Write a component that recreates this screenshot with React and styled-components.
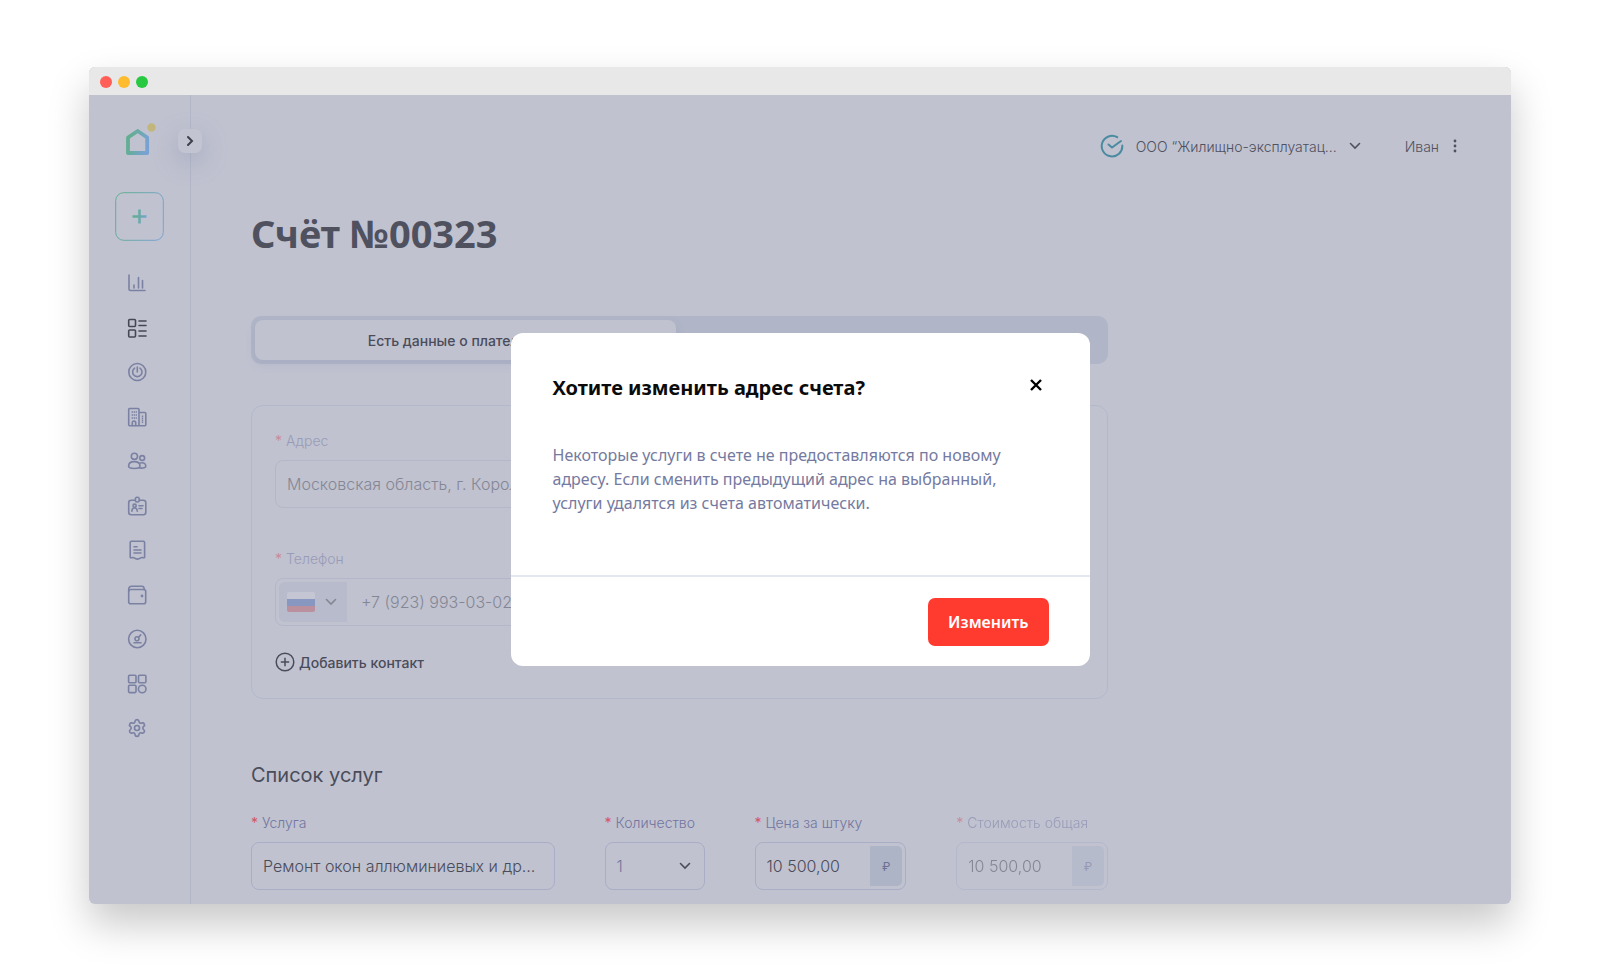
import { useState } from 'react';
import styled, { createGlobalStyle } from 'styled-components';
import { Settings } from 'lucide-react';

const navIcons = [
  {
    name: 'Аналитика',
    icon: <path d='M2 2v14a1.5 1.5 0 0 0 1.5 1.5H18M7 12v3M11.5 4.5V15M15.5 7.5V15' />,
  },
  {
    name: 'Счета',
    active: true,
    icon: (
      <>
        <rect x='1.7' y='1.5' width='6.8' height='7' rx='1' />
        <rect x='1.7' y='12' width='6.8' height='7' rx='1' />
        <path d='M12 3h7M12 7.5h7M12 13h7M12 18h7' />
      </>
    ),
  },
  {
    name: 'Состояние',
    icon: (
      <>
        <circle cx='10.3' cy='10' r='8.5' />
        <path d='M10.3 5v5M7.6 6.1a4.7 4.7 0 1 0 5.4 0' />
      </>
    ),
  },
  {
    name: 'Дома',
    icon: (
      <>
        <path d='M12 18.7H2.7a1 1 0 0 1-1-1V2.5a1 1 0 0 1 1-1H11a1 1 0 0 1 1 1v16.2M12 5.5h5.8a1 1 0 0 1 1 1v11.2a1 1 0 0 1-1 1H12' />
        <path d='M5.3 18.5v-2.8a1.7 1.7 0 0 1 3.4 0v2.8' />
        <path className='dots' d='M4.6 5h5.4M4.6 8h5.4M4.6 11h5.4M15.5 8.5v7.5' />
      </>
    ),
  },
  {
    name: 'Жители',
    icon: (
      <>
        <circle cx='7.4' cy='5.3' r='3.1' />
        <circle cx='15.2' cy='7' r='2.4' />
        <path d='M1.6 15c0-3 2.6-4.4 5.7-4.4S13 12 13 15c0 3.3-11.4 3.3-11.4 0zM12.5 12.3c2.7-1.2 6.3-.2 6.3 2.7 0 1.9-2.4 2.3-6 2' />
      </>
    ),
  },
  {
    name: 'Сотрудники',
    icon: (
      <>
        <path d='M8.2 4.2h-4a2.5 2.5 0 0 0-2.5 2.5v9.6a2.5 2.5 0 0 0 2.5 2.5h12.1a2.5 2.5 0 0 0 2.5-2.5V6.7a2.5 2.5 0 0 0-2.5-2.5h-3.9' />
        <rect x='8.4' y='1.3' width='3.8' height='4.7' rx='1.7' />
        <circle cx='7.6' cy='9.7' r='1.6' />
        <path d='M4.9 15.2c0-4.2 5.4-4.2 5.4 0M12 9.8h4M12 12.5h3' />
      </>
    ),
  },
  {
    name: 'Квитанции',
    icon: (
      <>
        <path d='M3.2 17.5v-15a1.2 1.2 0 0 1 1.2-1.2h12a1.2 1.2 0 0 1 1.2 1.2v15c-1.8.8-2.6-.6-3.9.3-1.3 1-2 1.3-3.3 1.3s-2-.3-3.3-1.3c-1.3-.9-2.1.5-3.9-.3z' />
        <path d='M7 6.8h3M7 10h7M7 13h7' />
      </>
    ),
  },
  {
    name: 'Кошелёк',
    icon: (
      <>
        <rect x='1.7' y='4.5' width='17' height='14.3' rx='2' />
        <path d='M1.7 6.500V4a2.7 2.7 0 0 1 2.7-2.7h10.300A2.300 2.300 0 0 1 17 4.500' />
        <circle cx='15' cy='11' r='.6' />
      </>
    ),
  },
  {
    name: 'Счётчики',
    icon: (
      <>
        <circle cx='10.3' cy='10' r='8.7' />
        <circle cx='10' cy='9.8' r='2' />
        <path d='m11.5 8.3 2.200-2.400M7 13.800h7' />
      </>
    ),
  },
  {
    name: 'Сервисы',
    icon: (
      <>
        <rect x='1.6' y='1.3' width='7.4' height='7.4' rx='1' />
        <rect x='11.5' y='1.3' width='7.4' height='7.4' rx='1' />
        <rect x='1.6' y='11.2' width='7.4' height='7.4' rx='1' />
        <circle cx='15.2' cy='15' r='3.8' />
      </>
    ),
  },
];

const chevronDown = (
  <svg width='12' height='12' viewBox='0 0 12 12' fill='none' stroke='currentColor' strokeWidth='1.6'>
    <path d='M1.5 3.5 6 8l4.5-4.5' strokeLinecap='round' />
  </svg>
);

function Logo() {
  return (
    <StyledLogo href='/' aria-label='Главная'>
      <svg width='30' height='33' viewBox='0 0 30 33' fill='none'>
        <defs>
          <linearGradient id='brand' x1='0' y1='0.3' x2='1' y2='0.6'>
            <stop offset='0.1' stopColor='#62ae92' />
            <stop offset='1' stopColor='#78a2d2' />
          </linearGradient>
        </defs>
        <path d='M2 30V14.5L11.7 8l9.5 6.5V30z' stroke='url(#brand)' strokeWidth='3.8' strokeLinejoin='round' />
        <circle cx='25.5' cy='4.500' r='4.200' fill='#c2b67c' />
      </svg>
    </StyledLogo>
  );
}

function Field({ id, label, faded, children }) {
  return (
    <StyledField $faded={faded}>
      <StyledLabel htmlFor={id}>
        <StyledStar>*</StyledStar>
        {label}
      </StyledLabel>
      <StyledControl>{children}</StyledControl>
    </StyledField>
  );
}

export default function App() {
  const [isOpen, setIsOpen] = useState(true);

  return (
    <StyledPage>
      <GlobalStyle />
      <StyledWindow>
        <StyledTitleBar>
          <StyledLight $color='#ff5f57' />
          <StyledLight $color='#febc2e' />
          <StyledLight $color='#28c840' />
        </StyledTitleBar>
        <StyledBody>
          <StyledSidebar>
            <Logo />
            <StyledToggle aria-label='Развернуть меню'>
              <svg width='12' height='12' viewBox='0 0 12 12' fill='none' stroke='currentColor' strokeWidth='2'>
                <path d='m4 2 4 4-4 4' strokeLinecap='round' />
              </svg>
            </StyledToggle>
            <StyledCreate aria-label='Создать'>
              <svg width='49' height='49' viewBox='0 0 49 49' fill='none'>
                <defs>
                  <linearGradient id='plus' gradientUnits='userSpaceOnUse' x1='17' y1='24' x2='32' y2='26'>
                    <stop offset='0.2' stopColor='#62ae92' />
                    <stop offset='1' stopColor='#78a2d2' />
                  </linearGradient>
                </defs>
                <rect x='.7' y='.7' width='47.6' height='47.6' rx='8' stroke='url(#brand)' strokeWidth='1' />
                <path d='M17.500 24.500h14M24.500 17.500v14' stroke='url(#plus)' strokeWidth='2.600' />
              </svg>
            </StyledCreate>
            <StyledNav>
              {navIcons.map((item) => (
                <StyledNavLink key={item.name} href='/' aria-label={item.name} $active={item.active}>
                  <svg width='20' height='20' viewBox='0 0 20 20'>
                    {item.icon}
                  </svg>
                </StyledNavLink>
              ))}
              <StyledNavLink href='/' aria-label='Настройки'>
                <Settings size={20} />
              </StyledNavLink>
            </StyledNav>
          </StyledSidebar>

          <StyledMain>
            <StyledHeader>
              <StyledHeaderButton>
                <StyledCheck width='24' height='24' viewBox='0 0 24 24'>
                  <path d='M17.2 3.2a10.3 10.3 0 1 0 5.100 8.300' />
                  <path d='m8.500 10.500 3.500 3L21 7' />
                </StyledCheck>
                ООО “Жилищно-эксплуатац...
                {chevronDown}
              </StyledHeaderButton>
              <StyledHeaderButton>
                Иван
                <svg width='8' height='14' viewBox='0 0 8 14' fill='currentColor'>
                  <circle cx='4' cy='2' r='1.4' />
                  <circle cx='4' cy='7' r='1.4' />
                  <circle cx='4' cy='12' r='1.4' />
                </svg>
              </StyledHeaderButton>
            </StyledHeader>

            <StyledContent>
              <StyledTitle>Счёт №00323</StyledTitle>
              <StyledTabs>
                <StyledTab $active>Есть данные о плательщике</StyledTab>
                <StyledTab aria-label='Нет данных' />
              </StyledTabs>

              <StyledCard>
                <Field id='address' label='Адрес' faded>
                  <StyledInput id='address' defaultValue='Московская область, г. Королёв' />
                </Field>
                <Field id='phone' label='Телефон' faded>
                  <StyledCountry aria-label='Код страны'>
                    <StyledFlag width='28' height='20' viewBox='0 0 28 20'>
                      <path fill='#c8cad6' d='M0 0h28v7H0z' />
                      <path fill='#4f6db0' d='M0 7h28v7H0z' />
                      <path fill='#b8606d' d='M0 14h28v6H0z' />
                    </StyledFlag>
                    {chevronDown}
                  </StyledCountry>
                  <StyledInput id='phone' type='tel' defaultValue='+7 (923) 993-03-02' />
                </Field>
                <StyledAdd>
                  <svg width='20' height='20' viewBox='0 0 20 20' fill='none' stroke='currentColor' strokeWidth='1.5'>
                    <circle cx='10' cy='10' r='8.8' />
                    <path d='M5.8 10h8.400M10 5.800v8.400' />
                  </svg>
                  Добавить контакт
                </StyledAdd>
              </StyledCard>

              <StyledSubtitle>Список услуг</StyledSubtitle>
              <StyledServices>
                <Field id='service' label='Услуга'>
                  <StyledInput id='service' defaultValue='Ремонт окон аллюминиевых и др…' />
                </Field>
                <Field id='count' label='Количество'>
                  <StyledSelect id='count'>
                    <option>1</option>
                  </StyledSelect>
                  <StyledArrow>{chevronDown}</StyledArrow>
                </Field>
                <Field id='price' label='Цена за штуку'>
                  <StyledInput id='price' defaultValue='10 500,00' />
                  <StyledCurrency>₽</StyledCurrency>
                </Field>
                <Field id='total' label='Стоимость общая' faded>
                  <StyledInput id='total' defaultValue='10 500,00' readOnly />
                  <StyledCurrency>₽</StyledCurrency>
                </Field>
              </StyledServices>
            </StyledContent>
          </StyledMain>

          {isOpen && (
            <StyledOverlay>
              <StyledModal role='dialog' aria-labelledby='modal-title'>
                <StyledModalBody>
                  <StyledModalHeader>
                    <StyledModalTitle id='modal-title'>Хотите изменить адрес счета?</StyledModalTitle>
                    <StyledClose aria-label='Закрыть' onClick={() => setIsOpen(false)}>
                      <svg width='12' height='12' viewBox='0 0 12 12' stroke='currentColor' strokeWidth='2.4'>
                        <path d='m1 1 10 10M11 1 1 11' />
                      </svg>
                    </StyledClose>
                  </StyledModalHeader>
                  <StyledModalText>
                    Некоторые услуги в счете не предоставляются по новому адресу. Если сменить предыдущий
                    адрес на выбранный, услуги удалятся из счета автоматически.
                  </StyledModalText>
                </StyledModalBody>
                <StyledModalFooter>
                  <StyledConfirm onClick={() => setIsOpen(false)}>Изменить</StyledConfirm>
                </StyledModalFooter>
              </StyledModal>
            </StyledOverlay>
          )}
        </StyledBody>
      </StyledWindow>
    </StyledPage>
  );
}

const GlobalStyle = createGlobalStyle`
  * {
    box-sizing: border-box;
  }

  body {
    margin: 0;
    background: #fff;
    color: #4a4c5a;
    font-family: Inter, 'Noto Sans', sans-serif;
    font-weight: 300;
  }

  button, input, select {
    font: inherit;
    color: inherit;
    border: 0;
    padding: 0;
    background: transparent;
  }

  button {
    cursor: pointer;
  }

  svg {
    display: block;
    flex-shrink: 0;
  }
`;

const StyledPage = styled.div`
  padding: 67px 89px;
`;

const StyledWindow = styled.div`
  border-radius: 6px;
  background: #c0c2d0;
  box-shadow: 0 20px 40px rgba(0, 0, 0, 0.22);
`;

const StyledTitleBar = styled.div`
  display: flex;
  align-items: center;
  gap: 6px;
  height: 28px;
  padding: 2px 11px 0;
  background: #e8e8e8;
  border-radius: 6px 6px 0 0;
`;

const StyledLight = styled.span`
  width: 12px;
  height: 12px;
  border-radius: 50%;
  background: ${({ $color }) => $color};
`;

const StyledBody = styled.div`
  position: relative;
  display: flex;
`;

const StyledSidebar = styled.aside`
  position: relative;
  flex: 0 0 102px;
  padding: 28px 0 0 26px;
  border-right: 1px solid #b3b7c8;
`;

const StyledLogo = styled.a`
  display: block;
  width: 30px;
  margin-left: 11px;
`;

const StyledToggle = styled.button`
  position: absolute;
  top: 34px;
  right: -12px;
  display: grid;
  place-items: center;
  width: 24px;
  height: 24px;
  border-radius: 7px;
  background: #c3c4d1;
  color: #3d3f4c;
  box-shadow: 0 8px 24px rgba(120, 132, 165, 0.4);
`;

const StyledCreate = styled.button`
  display: block;
  margin-top: 36px;
`;

const StyledNav = styled.nav`
  display: flex;
  flex-direction: column;
  justify-content: space-between;
  height: 465px;
  margin: 32px 0 0 12px;
`;

const StyledNavLink = styled.a`
  display: flex;
  height: 20px;
  color: ${({ $active }) => ($active ? '#454755' : '#7b81a2')};

  svg {
    fill: none;
    stroke: currentColor;
    stroke-width: 1.6;
    stroke-linecap: round;
    stroke-linejoin: round;
  }

  .lucide {
    stroke-width: 2;
  }

  .dots {
    stroke-width: 1.4;
    stroke-linecap: butt;
    stroke-dasharray: 1.4 0.6;
  }
`;

const StyledMain = styled.main`
  flex: 1;
  min-width: 0;
  padding: 39px 52px 14px 60px;
`;

const StyledHeader = styled.header`
  display: flex;
  justify-content: flex-end;
  gap: 44px;
`;

const StyledHeaderButton = styled.button`
  display: flex;
  align-items: center;
  gap: 12px;
  height: 24px;
  font-size: 14px;
  color: #4f515f;
`;

const StyledCheck = styled.svg`
  fill: none;
  stroke: #4b8ba0;
  stroke-width: 2;
  stroke-linecap: round;
`;

const StyledContent = styled.div`
  max-width: 857px;
`;

const StyledTitle = styled.h1`
  margin: 47px 0 55px;
  font: 700 38px/56px 'Noto Sans', sans-serif;
  color: #4f515f;
`;

const StyledTabs = styled.div`
  display: flex;
  gap: 8px;
  padding: 4px;
  border-radius: 10px;
  background: #b0b5c7;
`;

const StyledTab = styled.button`
  flex: 1;
  height: 40px;
  border-radius: 8px;
  font-size: 14px;
  font-weight: 500;
  background: ${({ $active }) => ($active ? '#c0c2d0' : 'transparent')};
  box-shadow: ${({ $active }) => ($active ? '0 4px 8px rgba(150, 156, 184, 0.3)' : 'none')};
`;

const StyledCard = styled.section`
  display: flex;
  flex-direction: column;
  margin-top: 41px;
  padding: 24px 23px;
  border: 1px solid #b3b9ca;
  border-radius: 12px;
`;

const StyledField = styled.div`
  min-width: 0;
  opacity: ${({ $faded }) => ($faded ? 0.5 : 1)};

  ${StyledCard} & {
    margin-bottom: 40px;
  }

  ${StyledCard} & + & {
    margin-bottom: 24px;
  }
`;

const StyledLabel = styled.label`
  display: flex;
  gap: 4px;
  margin-bottom: 8px;
  font-size: 14px;
  line-height: 22px;
  white-space: nowrap;
  color: #7276a0;
`;

const StyledStar = styled.span`
  font-weight: 400;
  color: #d0555f;
`;

const StyledControl = styled.div`
  display: flex;
  align-items: center;
  height: 48px;
  padding: 3px;
  border: 1px solid #a9aec6;
  border-radius: 8px;
`;

const StyledInput = styled.input`
  flex: 1;
  min-width: 0;
  width: 100%;
  padding: 0 8px;
  font-size: 16px;
  outline: none;
`;

const StyledSelect = styled.select`
  flex: 1;
  min-width: 0;
  appearance: none;
  padding: 0 8px;
  font-size: 16px;
  color: #7276a0;
  outline: none;
`;

const StyledArrow = styled.span`
  padding: 0 10px;
  pointer-events: none;
`;

const StyledCurrency = styled.span`
  display: grid;
  place-items: center;
  flex: 0 0 32px;
  align-self: stretch;
  border-radius: 0 5px 5px 0;
  background: #adb4c6;
  font-size: 12px;
  font-weight: 400;
  color: #6d7196;
`;

const StyledCountry = styled.button`
  display: flex;
  align-items: center;
  gap: 10px;
  align-self: stretch;
  margin-right: 6px;
  padding: 0 10px 0 8px;
  border-radius: 6px 0 0 6px;
  background: #b0b5c7;
`;

const StyledFlag = styled.svg`
  border-radius: 2px;
`;

const StyledAdd = styled.button`
  display: flex;
  align-items: center;
  gap: 4px;
  align-self: flex-start;
  height: 24px;
  font-size: 14px;
  font-weight: 500;
`;

const StyledSubtitle = styled.h2`
  margin: 62px 0 23px;
  font-size: 20px;
  line-height: 28px;
  font-weight: 400;
`;

const StyledServices = styled.div`
  display: grid;
  grid-template-columns: minmax(0, 2fr) 100px minmax(0, 1fr) minmax(0, 1fr);
  gap: 50px;
`;

const StyledOverlay = styled.div`
  position: absolute;
  inset: 0;
  display: grid;
  place-items: center;
`;

const StyledModal = styled.div`
  width: 100%;
  max-width: 579px;
  border-radius: 12px;
  background: #fff;
  font-family: 'Noto Sans', sans-serif;
`;

const StyledModalBody = styled.div`
  padding: 40px 42px 60px;
`;

const StyledModalHeader = styled.div`
  display: flex;
  justify-content: space-between;
  align-items: flex-start;
`;

const StyledModalTitle = styled.h3`
  margin: 0;
  font-size: 20px;
  line-height: 30px;
  font-weight: 700;
  color: #0b0b0c;
`;

const StyledClose = styled.button`
  padding: 6px;
  color: #000;
`;

const StyledModalText = styled.p`
  max-width: 460px;
  margin: 40px 0 0;
  font-size: 16px;
  line-height: 24px;
  font-weight: 400;
  color: #757aa0;
`;

const StyledModalFooter = styled.div`
  display: flex;
  justify-content: flex-end;
  padding: 21px 41px 20px;
  border-top: 2px solid #e6e8f1;
`;

const StyledConfirm = styled.button`
  height: 48px;
  padding: 0 20px;
  border-radius: 7px;
  background: #ff3b30;
  color: #fff;
  font-size: 16px;
  font-weight: 600;
`;
